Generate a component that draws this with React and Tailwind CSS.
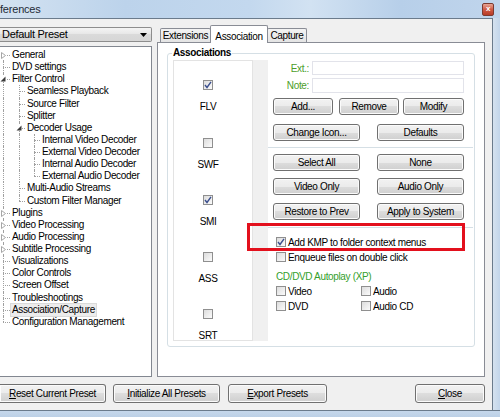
import React from "react";

const tree = [
  { t: "General", l: 0, exp: "c", first: true },
  { t: "DVD settings", l: 0 },
  { t: "Filter Control", l: 0, exp: "o" },
  { t: "Seamless Playback", l: 1 },
  { t: "Source Filter", l: 1 },
  { t: "Splitter", l: 1 },
  { t: "Decoder Usage", l: 1, exp: "o" },
  { t: "Internal Video Decoder", l: 2 },
  { t: "External Video Decoder", l: 2 },
  { t: "Internal Audio Decoder", l: 2 },
  { t: "External Audio Decoder", l: 2, last: true },
  { t: "Multi-Audio Streams", l: 1 },
  { t: "Custom Filter Manager", l: 1, last: true },
  { t: "Plugins", l: 0, exp: "c" },
  { t: "Video Processing", l: 0, exp: "c" },
  { t: "Audio Processing", l: 0, exp: "c" },
  { t: "Subtitle Processing", l: 0, exp: "c" },
  { t: "Visualizations", l: 0 },
  { t: "Color Controls", l: 0 },
  { t: "Screen Offset", l: 0 },
  { t: "Troubleshootings", l: 0 },
  { t: "Association/Capture", l: 0, sel: true },
  { t: "Configuration Management", l: 0, last: true },
];

const assoc = [
  { ext: "FLV", on: true },
  { ext: "SWF", on: false },
  { ext: "SMI", on: true },
  { ext: "ASS", on: false },
  { ext: "SRT", on: false },
];

const Btn = ({ children, className = "" }) => (
  <div
    className={
      "flex items-center justify-center rounded-[3px] border border-[#707070] bg-[linear-gradient(#f2f2f2_0%,#ebebeb_50%,#dddddd_50%,#cfcfcf_100%)] shadow-[inset_0_0_0_1px_#fbfbfb] text-black " +
      className
    }
  >
    {children}
  </div>
);

const Check = ({ on }) => (
  <div className="relative h-[10px] w-[10px] shrink-0 border border-[#8f8f8f] bg-[linear-gradient(135deg,#dcdcdc,#fbfbfb)]">
    {on && (
      <svg className="absolute left-[0px] top-[0px]" width="8" height="8" viewBox="0 0 8 8">
        <path d="M1 4 L3 6.5 L7 0.8" fill="none" stroke="#3b4f8e" strokeWidth="1.4" />
      </svg>
    )}
  </div>
);

const Guide = ({ left, half, fromMid }) => {
  const pos = half ? "top-0 h-1/2" : fromMid ? "top-1/2 bottom-0" : "top-0 bottom-0";
  return (
    <span
      className={`absolute ${pos} border-l border-dotted border-[#a0a0a0] ${left === 3 ? "left-[3px]" : "left-[4px]"}`}
    />
  );
};

const TreeRow = ({ item }) => {
  const g = item.l === 0 ? 3 : 4;
  const cells = [];
  for (let a = 0; a < item.l; a++) {
    cells.push(
      <div key={a} className="relative h-full w-[15px] shrink-0">
        <Guide left={a === 0 ? 3 : 4} />
      </div>
    );
  }
  return (
    <div className="flex h-[12.13px] items-center">
      {cells}
      <div className="relative h-full w-[11px] shrink-0">
        <Guide left={g} half={item.last} fromMid={item.first} />
        <span
          className={`absolute top-1/2 right-[1px] border-t border-dotted border-[#a0a0a0] ${g === 3 ? "left-[3px]" : "left-[4px]"}`}
        />
        {item.exp === "c" && (
          <svg
            className={`absolute top-[3px] bg-white ${g === 3 ? "left-[1px]" : "left-[2px]"}`}
            width="5"
            height="7"
            viewBox="0 0 5 7"
          >
            <path d="M0.5 0.5 L4.5 3.5 L0.5 6.5 Z" fill="#fff" stroke="#a6a6a6" strokeWidth="1" />
          </svg>
        )}
        {item.exp === "o" && (
          <svg
            className={`absolute top-[3px] bg-white ${g === 3 ? "left-[0px]" : "left-[1px]"}`}
            width="6"
            height="6"
            viewBox="0 0 6 6"
          >
            <path d="M5.5 0.5 L5.5 5.5 L0.5 5.5 Z" fill="#3c3c3c" />
          </svg>
        )}
      </div>
      <span
        className={`whitespace-nowrap px-[1px] leading-[12px] ${item.sel ? "bg-[#ececec] outline outline-[#dadada]" : ""}`}
      >
        {item.t}
      </span>
    </div>
  );
};

export default function App() {
  return (
    <div
      className="relative flex h-[417px] w-[500px] flex-col overflow-hidden bg-[#c9dbee] text-[10px] tracking-[-0.35px] text-black"
      style={{ fontFamily: '"Liberation Sans", Arial, sans-serif' }}
    >
      {/* title bar */}
      <div className="flex h-[18px] shrink-0 items-center justify-between bg-[linear-gradient(90deg,#d3e2f1_0%,#bcd3eb_25%,#c3d8ee_50%,#d2e2f2_62%,#b7cfe9_80%,#c0d5ec_100%)] pr-[6px]">
        <span className="text-[11px] tracking-[-0.2px] text-[#1e2a36]">ferences</span>
        <div className="flex h-[13px] w-[12px] items-center justify-center rounded-[2px] border border-[#7c3a30] bg-[linear-gradient(#e8a595,#cf5a45_50%,#b83a25)] text-[8px] font-bold leading-none text-white">
          x
        </div>
      </div>

      <div className="flex flex-1">
        {/* client area */}
        <div className="flex w-[493px] flex-col border-r border-t border-[#6b7b8c] bg-[#f0f0f0]">
          <div className="flex h-[358px]">
            {/* left column */}
            <div className="flex w-[152px] flex-col pt-[8px]">
              <div className="flex h-[15px] items-center justify-between rounded-r-[2px] border border-l-0 border-[#8d8d8d] bg-[linear-gradient(#f4f4f4,#e6e6e6_50%,#dadada_50%,#d6d6d6)] pl-[2px] pr-[4px]">
                <span className="text-[11px] tracking-[-0.3px]">Default Preset</span>
                <svg width="7" height="4" viewBox="0 0 7 4">
                  <path d="M0 0 L7 0 L3.5 4 Z" fill="#000" />
                </svg>
              </div>
              <div className="mt-[4px] h-[331px] border border-l-0 border-[#828790] bg-white pt-[2px]">
                {tree.map((it) => (
                  <TreeRow key={it.t} item={it} />
                ))}
              </div>
            </div>

            {/* right column */}
            <div className="ml-[5px] flex w-[328px] flex-col pt-[6px]">
              <div className="relative z-10 flex h-[17px] items-end pl-[3px]">
                <div className="flex h-[14px] w-[51px] items-center justify-center rounded-t-[2px] border border-b-0 border-[#898c95] bg-[linear-gradient(#f3f3f3,#e4e4e4)]">
                  Extensions
                </div>
                <div className="-mb-px -ml-px flex h-[18px] w-[58px] items-start justify-center rounded-t-[2px] border border-b-0 border-[#898c95] bg-white pt-[3px]">
                  Association
                </div>
                <div className="-ml-px flex h-[14px] w-[40px] items-center justify-center rounded-t-[2px] border border-b-0 border-[#898c95] bg-[linear-gradient(#f3f3f3,#e4e4e4)]">
                  Capture
                </div>
              </div>
              <div className="h-[335px] border border-[#898c95] bg-white pl-[9px] pt-[10px]">
                {/* group box */}
                <div className="relative h-[294px] w-[308px] rounded-[3px] border border-[#d5dfe5] pb-[5px] pl-[5px] pt-[6px]">
                  <span className="absolute left-[4px] top-[-7px] bg-white px-[1px] font-bold leading-[12px]">
                    Associations
                  </span>
                  <div className="flex h-full">
                    <div className="w-[80px] border border-[#e3e3e3] bg-white">
                      {assoc.map((a, i) => (
                        <div key={a.ext} className={`flex h-[57px] flex-col items-center ml-[17px] w-[34px] ${i === 0 ? "pt-[19px]" : "pt-[20px]"}`}>
                          <Check on={a.on} />
                          <span className="mt-[11px] leading-[12px]">{a.ext}</span>
                        </div>
                      ))}
                    </div>
                    <div className="w-[15px] bg-[#f0f0f0]" />
                    <div className="flex flex-1 flex-col">
                      <div className="mt-[1px] flex h-[14px] items-center">
                        <span className="w-[42px] pr-[1px] text-right text-[#4c9d2a]">Ext.:</span>
                        <div className="ml-[2px] h-full w-[152px] border border-[#e2e3ea] bg-white" />
                      </div>
                      <div className="mt-[3px] flex h-[15px] items-center">
                        <span className="w-[42px] pr-[1px] text-right text-[#4c9d2a]">Note:</span>
                        <div className="ml-[2px] h-full w-[152px] border border-[#e2e3ea] bg-white" />
                      </div>
                      <div className="mt-[5px] flex h-[17px] pl-[5px]">
                        <Btn className="w-[60px]">Add...</Btn>
                        <Btn className="ml-[6px] w-[60px]">Remove</Btn>
                        <Btn className="ml-[4px] w-[61px]">Modify</Btn>
                      </div>
                      <div className="mt-[9px] flex h-[17px] gap-[17px] pl-[5px]">
                        <Btn className="w-[87px]">Change Icon...</Btn>
                        <Btn className="w-[87px]">Defaults</Btn>
                      </div>
                      <div className="mr-[1px] mt-[6px] h-px bg-[#d5dfe5]" />
                      <div className="mt-[6px] flex h-[17px] gap-[17px] pl-[5px]">
                        <Btn className="w-[87px]">Select All</Btn>
                        <Btn className="w-[87px]">None</Btn>
                      </div>
                      <div className="mt-[7px] flex h-[17px] gap-[17px] pl-[5px]">
                        <Btn className="w-[87px]">Video Only</Btn>
                        <Btn className="w-[87px]">Audio Only</Btn>
                      </div>
                      <div className="mt-[8px] flex h-[17px] gap-[17px] pl-[5px]">
                        <Btn className="w-[87px]">Restore to Prev</Btn>
                        <Btn className="w-[87px]">Apply to System</Btn>
                      </div>
                      <div className="mr-[1px] mt-[7px] h-px bg-[#d5dfe5]" />
                      <div className="mt-[8px] flex h-[12px] items-center gap-[2px] pl-[8px]">
                        <Check on />
                        <span>Add KMP to folder context menus</span>
                      </div>
                      <div className="mt-[3px] flex h-[12px] items-center gap-[2px] pl-[8px]">
                        <Check />
                        <span>Enqueue files on double click</span>
                      </div>
                      <div className="mt-[7px] flex h-[12px] items-center pl-[8px] text-[#33a02c]">
                        CD/DVD Autoplay (XP)
                      </div>
                      <div className="mt-[3px] flex h-[12px] items-center pl-[8px]">
                        <div className="flex w-[85px] items-center gap-[2px]">
                          <Check />
                          <span>Video</span>
                        </div>
                        <div className="flex items-center gap-[2px]">
                          <Check />
                          <span>Audio</span>
                        </div>
                      </div>
                      <div className="mt-[3px] flex h-[12px] items-center pl-[8px]">
                        <div className="flex w-[85px] items-center gap-[2px]">
                          <Check />
                          <span>DVD</span>
                        </div>
                        <div className="flex items-center gap-[2px]">
                          <Check />
                          <span>Audio CD</span>
                        </div>
                      </div>
                    </div>
                  </div>
                </div>
              </div>
            </div>
          </div>

          {/* bottom buttons */}
          <div className="mt-[7px] flex h-[19px]">
            <Btn className="w-[106px] rounded-l-none border-l-0">
              <span><u>R</u>eset Current Preset</span>
            </Btn>
            <Btn className="ml-[7px] w-[107px]">
              <span><u>I</u>nitialize All Presets</span>
            </Btn>
            <Btn className="ml-[8px] w-[99px]">
              <span><u>E</u>xport Presets</span>
            </Btn>
            <Btn className="ml-[88px] w-[70px]">
              <span><u>C</u>lose</span>
            </Btn>
          </div>
        </div>
        <div className="flex-1 bg-[linear-gradient(90deg,#d5e2ef,#c2d5ea)]" />
      </div>
      <div className="h-[7px] shrink-0 border-t border-[#6b7b8c] bg-[linear-gradient(#c6d8ec,#bcd0e6)]" />

      {/* red highlight annotation */}
      <div className="pointer-events-none absolute left-[247px] top-[223px] h-[28px] w-[218px] border-[3px] border-[#e3101d]" />
    </div>
  );
}
